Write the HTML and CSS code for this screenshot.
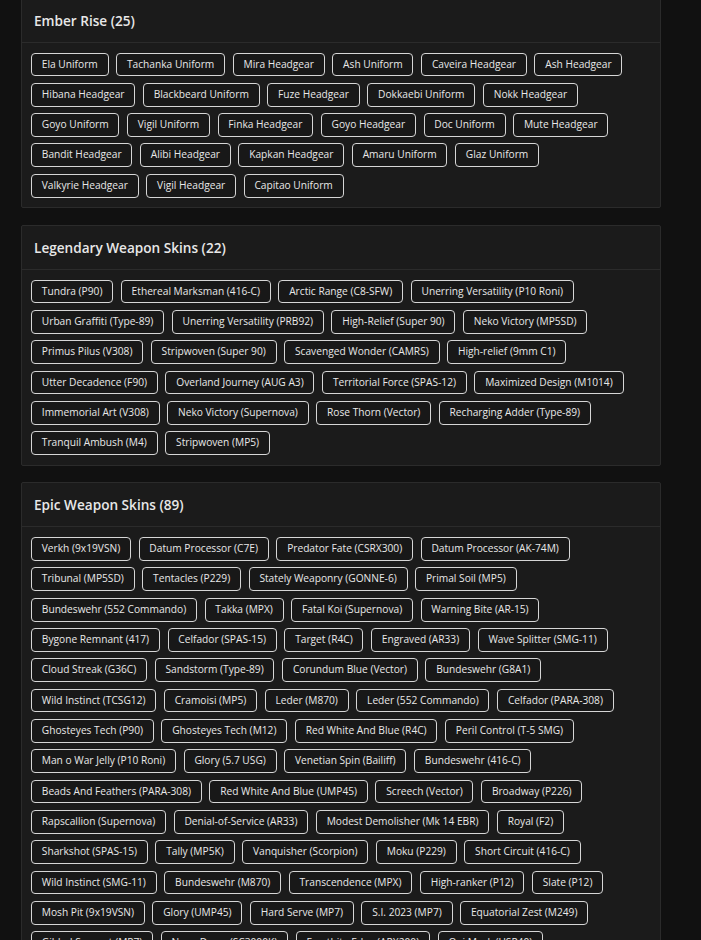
FILE: index.html
```html
<!DOCTYPE html>
<html lang="en">
<head>
<meta charset="utf-8">
<title>Collection</title>
<link rel="stylesheet" href="styles.css">
</head>
<body>
<main class="page">
  <section class="card">
    <header class="card-head"><h2 class="card-title">Ember Rise (25)</h2></header>
    <div class="chips">
      <span class="chip">Ela Uniform</span>
      <span class="chip">Tachanka Uniform</span>
      <span class="chip">Mira Headgear</span>
      <span class="chip">Ash Uniform</span>
      <span class="chip">Caveira Headgear</span>
      <span class="chip">Ash Headgear</span>
      <span class="chip">Hibana Headgear</span>
      <span class="chip">Blackbeard Uniform</span>
      <span class="chip">Fuze Headgear</span>
      <span class="chip">Dokkaebi Uniform</span>
      <span class="chip">Nokk Headgear</span>
      <span class="chip">Goyo Uniform</span>
      <span class="chip">Vigil Uniform</span>
      <span class="chip">Finka Headgear</span>
      <span class="chip">Goyo Headgear</span>
      <span class="chip">Doc Uniform</span>
      <span class="chip">Mute Headgear</span>
      <span class="chip">Bandit Headgear</span>
      <span class="chip">Alibi Headgear</span>
      <span class="chip">Kapkan Headgear</span>
      <span class="chip">Amaru Uniform</span>
      <span class="chip">Glaz Uniform</span>
      <span class="chip">Valkyrie Headgear</span>
      <span class="chip">Vigil Headgear</span>
      <span class="chip">Capitao Uniform</span>
    </div>
  </section>

  <section class="card">
    <header class="card-head"><h2 class="card-title">Legendary Weapon Skins (22)</h2></header>
    <div class="chips">
      <span class="chip">Tundra (P90)</span>
      <span class="chip">Ethereal Marksman (416-C)</span>
      <span class="chip">Arctic Range (C8-SFW)</span>
      <span class="chip">Unerring Versatility (P10 Roni)</span>
      <span class="chip">Urban Graffiti (Type-89)</span>
      <span class="chip">Unerring Versatility (PRB92)</span>
      <span class="chip">High-Relief (Super 90)</span>
      <span class="chip">Neko Victory (MP5SD)</span>
      <span class="chip">Primus Pilus (V308)</span>
      <span class="chip">Stripwoven (Super 90)</span>
      <span class="chip">Scavenged Wonder (CAMRS)</span>
      <span class="chip">High-relief (9mm C1)</span>
      <span class="chip">Utter Decadence (F90)</span>
      <span class="chip">Overland Journey (AUG A3)</span>
      <span class="chip">Territorial Force (SPAS-12)</span>
      <span class="chip">Maximized Design (M1014)</span>
      <span class="chip">Immemorial Art (V308)</span>
      <span class="chip">Neko Victory (Supernova)</span>
      <span class="chip">Rose Thorn (Vector)</span>
      <span class="chip">Recharging Adder (Type-89)</span>
      <span class="chip">Tranquil Ambush (M4)</span>
      <span class="chip">Stripwoven (MP5)</span>
    </div>
  </section>

  <section class="card">
    <header class="card-head"><h2 class="card-title">Epic Weapon Skins (89)</h2></header>
    <div class="chips">
      <span class="chip">Verkh (9x19VSN)</span>
      <span class="chip">Datum Processor (C7E)</span>
      <span class="chip">Predator Fate (CSRX300)</span>
      <span class="chip">Datum Processor (AK-74M)</span>
      <span class="chip">Tribunal (MP5SD)</span>
      <span class="chip">Tentacles (P229)</span>
      <span class="chip">Stately Weaponry (GONNE-6)</span>
      <span class="chip">Primal Soil (MP5)</span>
      <span class="chip">Bundeswehr (552 Commando)</span>
      <span class="chip">Takka (MPX)</span>
      <span class="chip">Fatal Koi (Supernova)</span>
      <span class="chip">Warning Bite (AR-15)</span>
      <span class="chip">Bygone Remnant (417)</span>
      <span class="chip">Celfador (SPAS-15)</span>
      <span class="chip">Target (R4C)</span>
      <span class="chip">Engraved (AR33)</span>
      <span class="chip">Wave Splitter (SMG-11)</span>
      <span class="chip">Cloud Streak (G36C)</span>
      <span class="chip">Sandstorm (Type-89)</span>
      <span class="chip">Corundum Blue (Vector)</span>
      <span class="chip">Bundeswehr (G8A1)</span>
      <span class="chip">Wild Instinct (TCSG12)</span>
      <span class="chip">Cramoisi (MP5)</span>
      <span class="chip">Leder (M870)</span>
      <span class="chip">Leder (552 Commando)</span>
      <span class="chip">Celfador (PARA-308)</span>
      <span class="chip">Ghosteyes Tech (P90)</span>
      <span class="chip">Ghosteyes Tech (M12)</span>
      <span class="chip">Red White And Blue (R4C)</span>
      <span class="chip">Peril Control (T-5 SMG)</span>
      <span class="chip">Man o War Jelly (P10 Roni)</span>
      <span class="chip">Glory (5.7 USG)</span>
      <span class="chip">Venetian Spin (Bailiff)</span>
      <span class="chip">Bundeswehr (416-C)</span>
      <span class="chip">Beads And Feathers (PARA-308)</span>
      <span class="chip">Red White And Blue (UMP45)</span>
      <span class="chip">Screech (Vector)</span>
      <span class="chip">Broadway (P226)</span>
      <span class="chip">Rapscallion (Supernova)</span>
      <span class="chip">Denial-of-Service (AR33)</span>
      <span class="chip">Modest Demolisher (Mk 14 EBR)</span>
      <span class="chip">Royal (F2)</span>
      <span class="chip">Sharkshot (SPAS-15)</span>
      <span class="chip">Tally (MP5K)</span>
      <span class="chip">Vanquisher (Scorpion)</span>
      <span class="chip">Moku (P229)</span>
      <span class="chip">Short Circuit (416-C)</span>
      <span class="chip">Wild Instinct (SMG-11)</span>
      <span class="chip">Bundeswehr (M870)</span>
      <span class="chip">Transcendence (MPX)</span>
      <span class="chip">High-ranker (P12)</span>
      <span class="chip">Slate (P12)</span>
      <span class="chip">Mosh Pit (9x19VSN)</span>
      <span class="chip">Glory (UMP45)</span>
      <span class="chip">Hard Serve (MP7)</span>
      <span class="chip">S.I. 2023 (MP7)</span>
      <span class="chip">Equatorial Zest (M249)</span>
      <span class="chip">Gilded Serpent (MP7)</span>
      <span class="chip">Neon Dawn (SC3000K)</span>
      <span class="chip">Frostbite Edge (ARX200)</span>
      <span class="chip">Oni Mask (USP40)</span>
    </div>
  </section>
</main>
</body>
</html>
```
FILE: styles.css
```css
* { box-sizing: border-box; }

html, body {
  margin: 0;
  padding: 0;
  background: #111111;
}

body {
  font-family: "Open Sans", "Liberation Sans", sans-serif;
  color: #e6e6e6;
}

.page {
  width: 640px;
  margin: -2.5px 0 0 21px;
  display: flex;
  flex-direction: column;
  gap: 16.6px;
}

.card {
  background: #1b1b1b;
  border: 1px solid #2b2b2b;
  border-radius: 2px;
}

.card-head {
  height: 44px;
  padding: 0 12px;
  display: flex;
  align-items: center;
  border-bottom: 1px solid #2b2b2b;
}

.card-title {
  margin: 0;
  font-size: 13.6px;
  font-weight: 600;
  color: #e8e8e8;
}

.chips {
  display: flex;
  flex-wrap: wrap;
  column-gap: 7.6px;
  row-gap: 6.53px;
  padding: 10px 9px 9.5px 9px;
}

.chip {
  display: inline-block;
  height: 23.8px;
  line-height: 21.8px;
  padding: 0 9.8px;
  border: 1px solid #d6d6d6;
  border-radius: 4px;
  background: #181818;
  font-size: 10.2px;
  color: #e8e8e8;
  white-space: nowrap;
}
```
